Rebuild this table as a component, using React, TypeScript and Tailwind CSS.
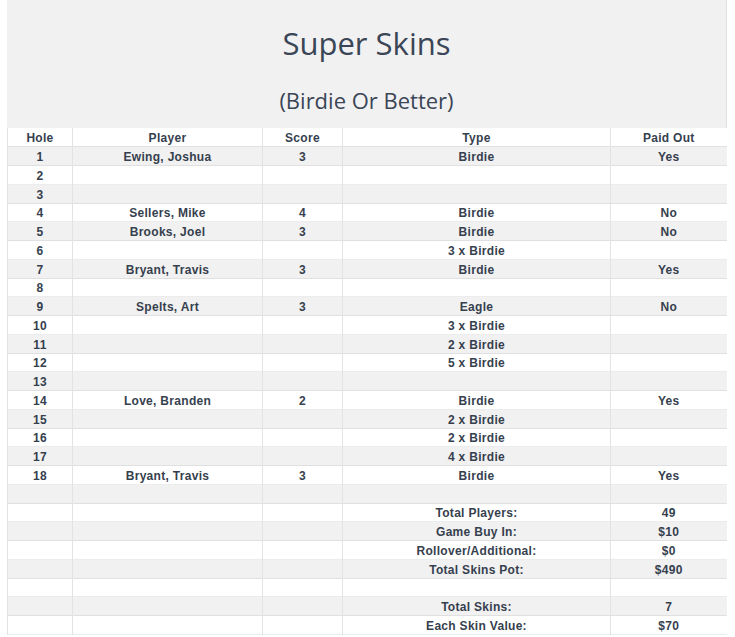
import React from "react";

type Row = { hole?: string; player?: string; score?: string; type?: string; paid?: string };

const holes: Row[] = [
  { hole: "1", player: "Ewing, Joshua", score: "3", type: "Birdie", paid: "Yes" },
  { hole: "2" },
  { hole: "3" },
  { hole: "4", player: "Sellers, Mike", score: "4", type: "Birdie", paid: "No" },
  { hole: "5", player: "Brooks, Joel", score: "3", type: "Birdie", paid: "No" },
  { hole: "6", type: "3 x Birdie" },
  { hole: "7", player: "Bryant, Travis", score: "3", type: "Birdie", paid: "Yes" },
  { hole: "8" },
  { hole: "9", player: "Spelts, Art", score: "3", type: "Eagle", paid: "No" },
  { hole: "10", type: "3 x Birdie" },
  { hole: "11", type: "2 x Birdie" },
  { hole: "12", type: "5 x Birdie" },
  { hole: "13" },
  { hole: "14", player: "Love, Branden", score: "2", type: "Birdie", paid: "Yes" },
  { hole: "15", type: "2 x Birdie" },
  { hole: "16", type: "2 x Birdie" },
  { hole: "17", type: "4 x Birdie" },
  { hole: "18", player: "Bryant, Travis", score: "3", type: "Birdie", paid: "Yes" },
  {},
  { type: "Total Players:", paid: "49" },
  { type: "Game Buy In:", paid: "$10" },
  { type: "Rollover/Additional:", paid: "$0" },
  { type: "Total Skins Pot:", paid: "$490" },
  {},
  { type: "Total Skins:", paid: "7" },
  { type: "Each Skin Value:", paid: "$70" },
];

const cell = "border-l border-[#e3e3e3] text-center p-0 pt-[2px] leading-none";

export default function App() {
  return (
    <div className="bg-white w-[735px] h-[637px] pl-[7px] overflow-hidden">
      <div className="w-[720px] border-r border-[#e0e0e0]">
        {/* Titel */}
        <div
          className="h-[128px] bg-[#f1f1f1] flex flex-col items-center text-[#3a4556]"
          style={{ fontFamily: '"Open Sans", sans-serif' }}
        >
          <h1 className="text-[31px] leading-none mt-[28px]">Super Skins</h1>
          <h2 className="text-[22px] leading-none mt-[30px]">(Birdie Or Better)</h2>
        </div>

        <table
          className="w-[719px] border-collapse table-fixed text-[12px] font-bold tracking-[0.3px] text-[#363f4e]"
          style={{ fontFamily: '"Liberation Sans", Arial, sans-serif' }}
        >
          <colgroup>
            <col className="w-[65px]" />
            <col className="w-[190px]" />
            <col className="w-[80px]" />
            <col className="w-[268px]" />
            <col className="w-[116px]" />
          </colgroup>
          <thead>
            <tr className="h-[18.75px] bg-white border-b border-[#e0e0e0]">
              <th className={cell}>Hole</th>
              <th className={cell}>Player</th>
              <th className={cell}>Score</th>
              <th className={cell}>Type</th>
              <th className={cell}>Paid Out</th>
            </tr>
          </thead>
          <tbody>
            {holes.map((r, i) => (
              <tr
                key={i}
                className={
                  i % 2 === 0
                    ? "h-[18.75px] bg-[#f1f1f1] border-b border-[#e0e0e0]"
                    : "h-[18.75px] bg-white border-b border-[#ececec]"
                }
              >
                <td className={cell}>{r.hole}</td>
                <td className={cell}>{r.player}</td>
                <td className={cell}>{r.score}</td>
                <td className={cell}>{r.type}</td>
                <td className={cell}>{r.paid}</td>
              </tr>
            ))}
          </tbody>
        </table>
      </div>
    </div>
  );
}
